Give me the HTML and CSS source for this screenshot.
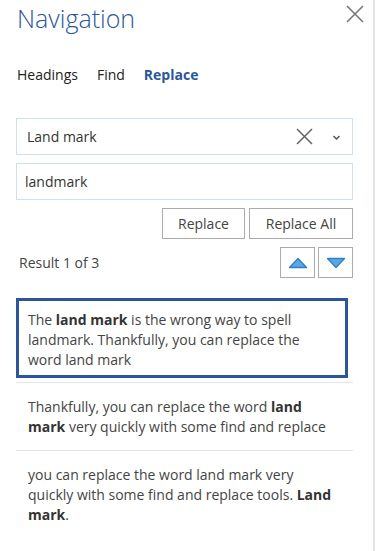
FILE: index.html
```html
<!DOCTYPE html>
<html lang="en">
<head>
  <meta charset="UTF-8" />
  <meta name="viewport" content="width=device-width, initial-scale=1.0"/>
  <title>Navigation</title>
  <link rel="stylesheet" href="styles.css">
</head>
<body>
  <div class="pane">
    <div class="pane-header">
      <h1>Navigation</h1>
      <button class="close" title="Close">
        <svg width="18" height="18" viewBox="0 0 18 18"><path d="M1 1 L17 17 M17 1 L1 17" stroke="#777" stroke-width="1.6" fill="none"/></svg>
      </button>
    </div>

    <div class="tabs">
      <span>Headings</span>
      <span>Find</span>
      <span class="active">Replace</span>
    </div>

    <div class="search">
      <div class="field field-find">
        <span class="field-text">Land mark</span>
        <svg class="clear" width="17" height="17" viewBox="0 0 17 17"><path d="M1 1 L16 16 M16 1 L1 16" stroke="#666" stroke-width="1.5" fill="none"/></svg>
        <svg class="chevron" width="7" height="5" viewBox="0 0 7 5"><path d="M0.5 1 L3.5 4 L6.5 1" stroke="#555" stroke-width="1.5" fill="none"/></svg>
      </div>
      <div class="field">
        <span class="field-text">landmark</span>
      </div>

      <div class="actions">
        <button class="btn btn-replace">Replace</button>
        <button class="btn btn-all">Replace All</button>
      </div>

      <div class="result-bar">
        <span>Result 1 of 3</span>
        <div class="arrows">
          <button class="arrow">
            <svg width="20" height="12" viewBox="0 0 20 12"><path d="M10 1.5 L18.5 10.5 L1.5 10.5 Z" fill="#5aa7e6" stroke="#2f7fc4" stroke-width="1.3" stroke-linejoin="round"/></svg>
          </button>
          <button class="arrow">
            <svg width="20" height="12" viewBox="0 0 20 12"><path d="M1.5 1.5 L18.5 1.5 L10 10.5 Z" fill="#5aa7e6" stroke="#2f7fc4" stroke-width="1.3" stroke-linejoin="round"/></svg>
          </button>
        </div>
      </div>
    </div>

    <ul class="results">
      <li class="result selected">
        <div class="result-box">The <b>land mark</b> is the wrong way to spell landmark. Thankfully, you can replace the word land mark</div>
      </li>
      <li class="result">Thankfully, you can replace the word <b>land mark</b> very quickly with some find and replace</li>
      <li class="result last">you can replace the word land mark very quickly with some find and replace tools. <b>Land mark</b>.</li>
    </ul>
  </div>
</body>
</html>
```

FILE: styles.css
```css
* {
  box-sizing: border-box;
}

body {
  margin: 0;
  font-family: 'Segoe UI', 'Open Sans', sans-serif;
  background: white;
  color: #444;
}

.pane {
  width: 375px;
  height: 551px;
  border-right: 2px solid #e3e3e3;
  padding: 0 20px 0 16px;
  overflow: hidden;
}

.pane-header {
  display: flex;
  justify-content: space-between;
  align-items: flex-start;
  height: 36px;
}

.pane-header h1 {
  margin: 0;
  padding-left: 1px;
  font-size: 25px;
  font-weight: 300;
  line-height: 36px;
  color: #2b579a;
}

.close {
  background: none;
  border: none;
  padding: 0;
  margin: 5px -11px 0 0;
  width: 18px;
  height: 18px;
  cursor: pointer;
}

.close svg {
  display: block;
}

.tabs {
  display: flex;
  gap: 19px;
  margin-top: 29px;
  padding-left: 1px;
  font-size: 14px;
  line-height: 20px;
  color: #222;
}

.tabs .active {
  font-weight: bold;
  color: #2b579a;
}

.search {
  margin-top: 33px;
}

.field {
  display: flex;
  align-items: center;
  height: 37px;
  margin-bottom: 8px;
  padding: 0 8px;
  border: 1px solid #cfdff2;
  font-size: 14px;
  color: #333;
}

.field-find {
  padding-left: 10px;
}

.field-text {
  flex: 1;
}

.clear {
  margin-right: 20px;
}

.chevron {
  margin-right: 4px;
  margin-top: 2px;
}

.actions {
  display: flex;
  justify-content: flex-end;
  gap: 4px;
  margin-bottom: 8px;
}

.btn {
  height: 31px;
  background: white;
  border: 1px solid #ababab;
  font-family: inherit;
  font-size: 14px;
  color: #444;
  padding: 0;
  cursor: pointer;
}

.btn-replace {
  width: 83px;
}

.btn-all {
  width: 104px;
}

.result-bar {
  display: flex;
  justify-content: space-between;
  align-items: center;
  padding-left: 3px;
  font-size: 14px;
  color: #444;
}

.arrows {
  display: flex;
  gap: 3px;
}

.arrow {
  width: 35px;
  height: 31px;
  background: white;
  border: 1px solid #ababab;
  padding: 0;
  display: flex;
  align-items: center;
  justify-content: center;
  cursor: pointer;
}

.arrow svg {
  display: block;
}

.results {
  list-style: none;
  margin: 20px 0 0;
  padding: 0;
  font-size: 14px;
  line-height: 20px;
  color: #444;
}

.results b {
  color: #333;
}

.result {
  padding: 14px 12px 13px;
  border-bottom: 1px solid #e6e6e6;
}

.result.selected {
  padding: 0 0 4px;
}

.result.last {
  border-bottom: none;
}

.result-box {
  margin-right: 5px;
  padding: 9px 9px 5px;
  border: 3px solid #2b579a;
}
```
